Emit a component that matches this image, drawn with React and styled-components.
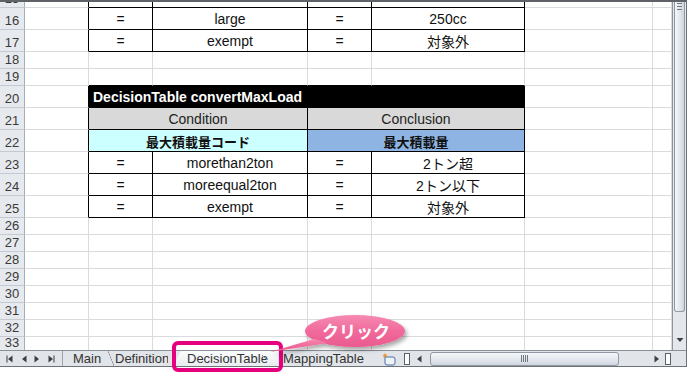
import React from "react";
import styled, { createGlobalStyle } from "styled-components";

const GlobalStyle = createGlobalStyle`
  html, body {
    margin: 0;
    padding: 0;
    background: #fff;
  }
  body {
    font-family: "Liberation Sans", "Noto Sans CJK JP", sans-serif;
  }
`;

const COLS = "25px 64px 64px 155px 64px 153px 128px 19px";
const GRID = "#d9dbde";
const INK = "#000";

const rows = [
  { n: 15, h: 6, kind: "data", vals: ["", "", "", ""] },
  { n: 16, h: 22, kind: "data", vals: ["=", "large", "=", "250cc"] },
  { n: 17, h: 22, kind: "data", vals: ["=", "exempt", "=", "対象外"] },
  { n: 18, h: 17, kind: "empty" },
  { n: 19, h: 17, kind: "empty", above: true },
  { n: 20, h: 22, kind: "title", text: "DecisionTable convertMaxLoad" },
  { n: 21, h: 22, kind: "head", left: "Condition", right: "Conclusion" },
  { n: 22, h: 22, kind: "sub", left: "最大積載量コード", right: "最大積載量" },
  { n: 23, h: 22, kind: "data", vals: ["=", "morethan2ton", "=", "2トン超"] },
  { n: 24, h: 22, kind: "data", vals: ["=", "moreequal2ton", "=", "2トン以下"] },
  { n: 25, h: 22, kind: "data", vals: ["=", "exempt", "=", "対象外"] },
  { n: 26, h: 17, kind: "empty" },
  { n: 27, h: 17, kind: "empty" },
  { n: 28, h: 17, kind: "empty" },
  { n: 29, h: 17, kind: "empty" },
  { n: 30, h: 17, kind: "empty" },
  { n: 31, h: 17, kind: "empty" },
  { n: 32, h: 17, kind: "empty" },
  { n: 33, h: 17, kind: "empty" },
];

const Page = styled.div`
  width: 689px;
  height: 375px;
  background: #fff;
  position: relative;
  overflow: hidden;
`;

const Window = styled.div`
  width: 687px;
  display: grid;
  grid-template-columns: 672px 15px;
  grid-template-rows: 348px 16px;
  border-top: 2px solid #5f6368;
  border-bottom: 1px solid #6d7178;
`;

const Sheet = styled.div`
  display: flex;
  flex-direction: column;
  overflow: hidden;
  background: #fff;
`;

const Row = styled.div`
  display: grid;
  grid-template-columns: ${COLS};
  height: ${(p) => p.$h}px;
  flex-shrink: 0;
`;

const RowHead = styled.div`
  box-sizing: border-box;
  background: #e6e9ed;
  border-right: 1px solid #a9aeb5;
  border-bottom: 1px solid #c6cad0;
  display: flex;
  align-items: ${(p) => (p.$top ? "flex-start" : "flex-end")};
  justify-content: center;
  font-size: 13px;
  line-height: ${(p) => (p.$top ? 12 : 15)}px;
  color: #3a3a3a;
  padding-bottom: 1px;
  overflow: hidden;
`;

const Cell = styled.div`
  box-sizing: border-box;
  grid-column: span ${(p) => p.$span || 1};
  border-right: 1px solid ${(p) => p.$r || GRID};
  border-bottom: 1px solid ${(p) => p.$b || GRID};
  background: ${(p) => p.$bg || "#fff"};
  color: ${(p) => p.$color || "#111"};
  font-size: ${(p) => (p.$small ? 13 : 14)}px;
  font-weight: ${(p) => (p.$bold ? 700 : 400)};
  display: flex;
  align-items: center;
  justify-content: ${(p) => (p.$left ? "flex-start" : "center")};
  padding: 1px 0 0 ${(p) => (p.$left ? 4 : 0)}px;
  white-space: nowrap;
  overflow: hidden;
`;

const SheetRow = ({ row, last }) => {
  const inTable = row.kind !== "empty";
  let body;
  if (row.kind === "empty") {
    const b = row.above ? INK : GRID;
    body = [0, 1, 2, 3].map((i) => <Cell key={i} $b={b} />);
  } else if (row.kind === "title") {
    body = (
      <Cell $span={4} $r={INK} $b={INK} $bg="#000" $color="#fff" $bold $left>
        {row.text}
      </Cell>
    );
  } else if (row.kind === "head") {
    body = [row.left, row.right].map((t) => (
      <Cell key={t} $span={2} $r={INK} $b={INK} $bg="#d9d9d9" $color="#222">
        {t}
      </Cell>
    ));
  } else if (row.kind === "sub") {
    body = [
      <Cell key="l" $span={2} $r={INK} $b={INK} $bg="#ccffff" $bold $small>
        {row.left}
      </Cell>,
      <Cell key="r" $span={2} $r={INK} $b={INK} $bg="#8db4e2" $bold $small>
        {row.right}
      </Cell>,
    ];
  } else {
    body = row.vals.map((v, i) => (
      <Cell key={i} $r={INK} $b={INK}>
        {v}
      </Cell>
    ));
  }

  return (
    <Row $h={row.h}>
      <RowHead $top={last}>{row.n}</RowHead>
      <Cell $r={inTable ? INK : GRID} />
      {body}
      <Cell />
      <Cell />
    </Row>
  );
};

const VScroll = styled.div`
  display: flex;
  flex-direction: column;
  background: #e4e7eb;
  border-left: 1px solid #8e949b;
  border-right: 1px solid #6d7178;
`;

const VThumb = styled.div`
  flex: 0 0 310px;
  box-sizing: border-box;
  margin: 0 1px;
  background: linear-gradient(to right, #f5f7fa, #dde2e9 70%, #cfd5dd);
  border: 1px solid #8f98a3;
  border-top: none;
  border-radius: 0 0 3px 3px;
  position: relative;

  &::before {
    content: "";
    position: absolute;
    left: 2px;
    right: 2px;
    top: 1px;
    height: 7px;
    background: repeating-linear-gradient(#6f7780 0 1px, transparent 1px 3px);
  }
`;

const VTrack = styled.div`
  flex: 1;
`;

const ArrowBox = styled.div`
  display: flex;
  align-items: center;
  justify-content: center;
  height: ${(p) => p.$h || 16}px;
  width: ${(p) => p.$w || "auto"};
  flex-shrink: 0;
`;

const Corner = styled.div`
  background: #e1e4e8;
  border-top: 1px solid #8b9097;
  border-right: 1px solid #6d7178;
`;

const Bar = styled.div`
  box-sizing: border-box;
  display: flex;
  align-items: stretch;
  background: #e1e4e8;
  border-top: 1px solid #8b9097;
  height: 16px;
  font-size: 13px;
  color: #333;
`;

const Nav = styled.div`
  width: 63px;
  box-sizing: border-box;
  display: flex;
  align-items: center;
  justify-content: space-between;
  padding: 0 7px 0 6px;
  border-right: 1px solid #a0a5ac;
  flex-shrink: 0;
`;

const Tab = styled.div`
  width: ${(p) => p.$w}px;
  flex-shrink: 0;
  box-sizing: border-box;
  display: flex;
  align-items: center;
  padding-left: ${(p) => p.$pad || 0}px;
  white-space: nowrap;
  overflow: hidden;
  line-height: 14px;
`;

const ActiveTab = styled.div`
  width: 114px;
  flex-shrink: 0;
  box-sizing: border-box;
  position: relative;
  display: flex;
  align-items: center;
  padding-left: 19px;
  line-height: 14px;
  white-space: nowrap;

  &::before {
    content: "";
    position: absolute;
    left: 5px;
    right: 4px;
    top: 0;
    bottom: 0;
    z-index: 0;
    background: linear-gradient(#fbfcfd, #e9ecf0);
    clip-path: polygon(8px 0, 100% 0, 100% 100%, 0 100%);
  }

  &::after {
    content: "";
    position: absolute;
    left: 4px;
    right: -1px;
    top: -10px;
    bottom: -6px;
    border: 4px solid #e4007f;
    border-radius: 6px;
  }

  span {
    position: relative;
  }
`;

const Slash = styled.span`
  width: 6px;
  flex-shrink: 0;
  background: linear-gradient(
    to top right,
    transparent calc(50% - 0.6px),
    #7d838a 50%,
    transparent calc(50% + 0.6px)
  );
`;

const Notch = styled.span`
  position: absolute;
  right: 6px;
  bottom: 1px;
  width: 5px;
  height: 5px;
  background: linear-gradient(
    to top right,
    transparent calc(50% - 0.6px),
    #8a9097 50%,
    transparent calc(50% + 0.6px)
  );
`;

const HScroll = styled.div`
  flex: 1;
  display: flex;
  align-items: center;
`;

const SplitBox = styled.span`
  width: 4px;
  height: 10px;
  background: #fff;
  border: 1px solid #5c6168;
  flex-shrink: 0;
  margin: 0 ${(p) => p.$mr || 0}px 0 ${(p) => p.$ml || 0}px;
`;

const HThumb = styled.div`
  width: 189px;
  height: 14px;
  box-sizing: border-box;
  margin-left: 6px;
  background: linear-gradient(#f5f7fa, #dde2e9 70%, #cfd5dd);
  border: 1px solid #8f98a3;
  border-radius: 3px;
  display: flex;
  align-items: center;
  justify-content: center;

  &::before {
    content: "";
    width: 7px;
    height: 7px;
    background: repeating-linear-gradient(to right, #6f7780 0 1px, transparent 1px 2px);
  }
`;

const HTrack = styled.div`
  flex: 1;
`;

const Callout = styled.div`
  position: absolute;
  left: 262px;
  top: 309px;
  width: 152px;
  height: 50px;
`;

const Bubble = styled.svg`
  position: absolute;
  inset: 0;
`;

const Label = styled.span`
  position: absolute;
  left: 56px;
  top: 11px;
  width: 76px;
  text-align: center;
  font-family: "Noto Sans CJK JP", sans-serif;
  font-size: 17px;
  line-height: 22px;
  font-weight: 700;
  color: #fff;
`;

const Tri = ({ dir, bar }) => (
  <svg width="8" height="8" viewBox="0 0 8 8">
    {dir === "left" ? (
      <polygon points="6.5,0.5 6.5,7.5 2,4" fill="#3b3f45" />
    ) : dir === "right" ? (
      <polygon points="1.5,0.5 1.5,7.5 6,4" fill="#3b3f45" />
    ) : (
      <polygon points="0.5,2 7.5,2 4,6" fill="#3b3f45" />
    )}
    {bar === "left" && <rect x="0.5" y="0.5" width="1" height="7" fill="#3b3f45" />}
    {bar === "right" && <rect x="6.5" y="0.5" width="1" height="7" fill="#3b3f45" />}
  </svg>
);

const InsertIcon = () => (
  <svg width="16" height="14" viewBox="0 0 16 14">
    <path d="M4 5 h8 q2 0 2 2 v4 q0 2 -2 2 h-6 q-2 0 -2 -2 z" fill="#eef3f9" stroke="#4a6fa5" strokeWidth="1" />
    <path d="M4 1 l0.8 1.6 1.7 0.3 -1.3 1.1 0.4 1.7 -1.6 -0.9 -1.6 0.9 0.4 -1.7 -1.3 -1.1 1.7 -0.3 z" fill="#e8962c" />
  </svg>
);

const App = () => {
  return (
    <Page>
      <GlobalStyle />
      <Window>
        <Sheet>
          {rows.map((r, i) => (
            <SheetRow key={r.n} row={r} last={i === rows.length - 1} />
          ))}
        </Sheet>
        <VScroll>
          <VThumb />
          <VTrack />
          <ArrowBox $h={20}>
            <Tri dir="down" />
          </ArrowBox>
        </VScroll>
        <Bar>
          <Nav>
            <Tri dir="left" bar="left" />
            <Tri dir="left" />
            <Tri dir="right" />
            <Tri dir="right" bar="right" />
          </Nav>
          <Tab $w={45} $pad={10}>Main</Tab>
          <Slash />
          <Tab $w={54} $pad={1}>Definition</Tab>
          <ActiveTab>
            <span>DecisionTable</span>
            <Notch />
          </ActiveTab>
          <Tab $w={96} $pad={1}>MappingTable</Tab>
          <ArrowBox $w="22px">
            <InsertIcon />
          </ArrowBox>
          <HScroll>
            <SplitBox $ml={4} $mr={4} />
            <ArrowBox $w="10px">
              <Tri dir="left" />
            </ArrowBox>
            <HThumb />
            <HTrack />
            <ArrowBox $w="10px">
              <Tri dir="right" />
            </ArrowBox>
            <SplitBox $ml={3} $mr={1} />
          </HScroll>
        </Bar>
        <Corner />
      </Window>
      <Callout>
        <Bubble width="152" height="50" viewBox="0 0 152 50">
          <defs>
            <linearGradient id="pink" x1="0" y1="0" x2="0" y2="1">
              <stop offset="0" stopColor="#f68bb2" />
              <stop offset="0.5" stopColor="#f06a9b" />
              <stop offset="1" stopColor="#ea5a8e" />
            </linearGradient>
            <filter id="shadow" x="-10%" y="-20%" width="130%" height="160%">
              <feDropShadow dx="2" dy="3" stdDeviation="2" floodColor="#000" floodOpacity="0.35" />
            </filter>
          </defs>
          <g filter="url(#shadow)" fill="url(#pink)">
            <ellipse cx="93" cy="22" rx="50" ry="16" />
            <polygon points="8,43 52,30 66,34" />
          </g>
        </Bubble>
        <Label>クリック</Label>
      </Callout>
    </Page>
  );
};

export default App;
